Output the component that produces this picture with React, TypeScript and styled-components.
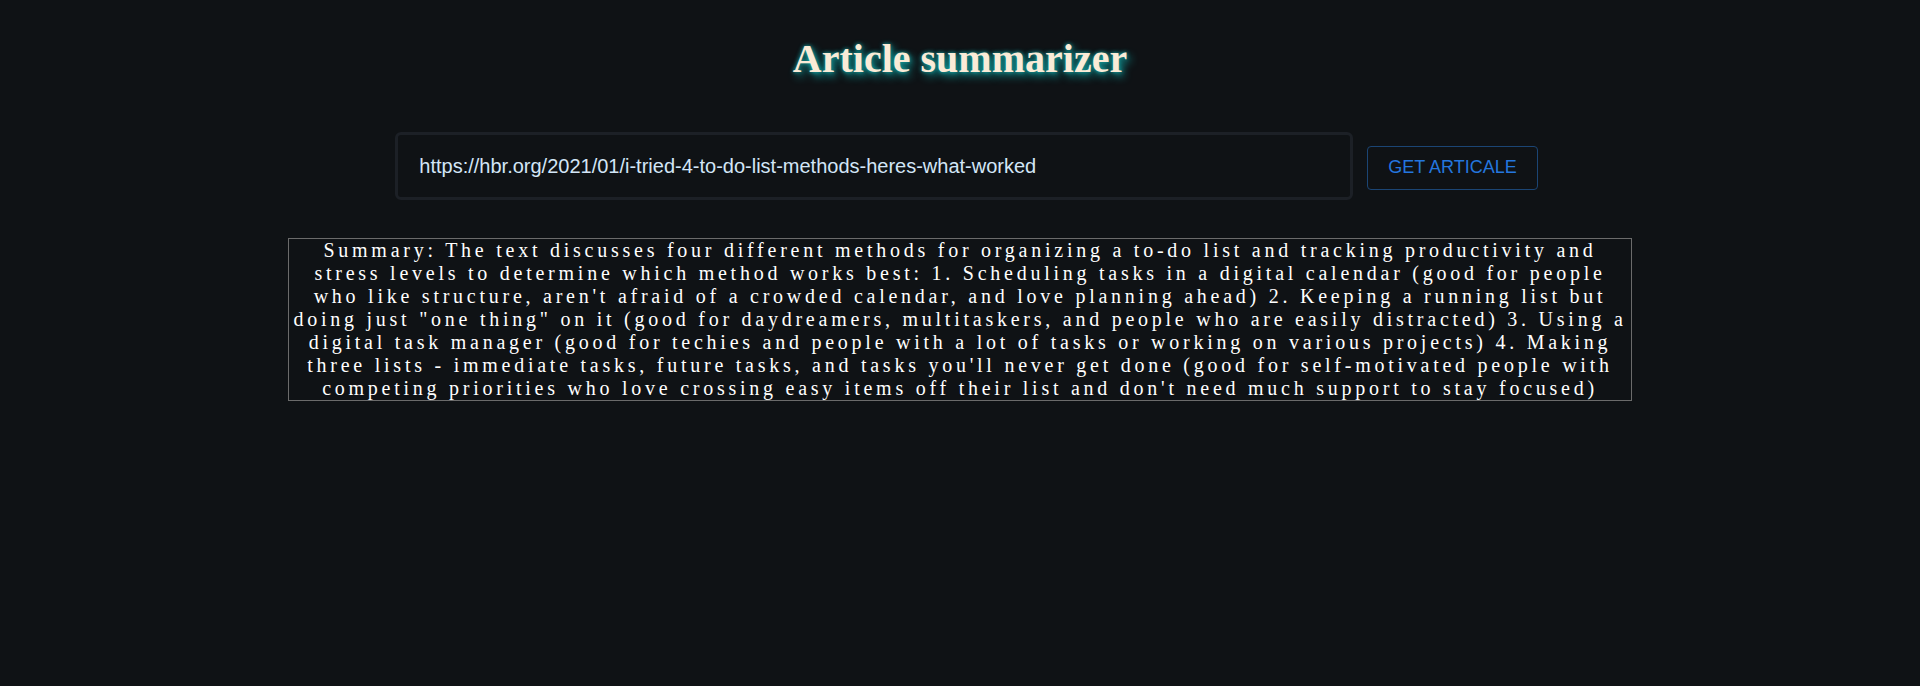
import React from "react";
import styled, { createGlobalStyle } from "styled-components";

const GlobalStyle = createGlobalStyle`
  html, body {
    margin: 0;
    padding: 0;
    background: #0f1215;
  }
  body {
    min-height: 686px;
    font-family: "Liberation Serif", "Times New Roman", serif;
  }
`;

const Page = styled.main`
  display: flex;
  flex-direction: column;
  align-items: center;
  padding-top: 31px;
`;

const Title = styled.h1`
  margin: 0;
  font-family: "Liberation Serif", "Times New Roman", serif;
  font-size: 40px;
  font-weight: bold;
  line-height: 56px;
  color: #faebd7;
  text-shadow: 0 0 4px #17b3b3, 3px 4px 8px #0f9a9a;
`;

const SearchRow = styled.div`
  display: flex;
  align-items: center;
  gap: 14px;
  margin-top: 45px;
  padding-left: 13px;
`;

const UrlInput = styled.input`
  box-sizing: border-box;
  width: 958px;
  height: 68px;
  padding: 0 21px;
  background: #0f1215;
  border: 3px solid #1c2026;
  border-radius: 6px;
  color: #d3e6f7;
  font-family: "Liberation Sans", Arial, sans-serif;
  font-size: 20px;
  outline: none;
`;

const FetchButton = styled.button`
  box-sizing: border-box;
  height: 44px;
  padding: 0 20px;
  margin-top: 3px;
  background: transparent;
  border: 1px solid #1b4574;
  border-radius: 4px;
  color: #2476de;
  font-family: "Liberation Sans", Arial, sans-serif;
  font-size: 18px;
  text-transform: uppercase;
  cursor: pointer;
`;

const SummaryBox = styled.section`
  box-sizing: border-box;
  width: 1344px;
  margin-top: 38px;
  border: 1px solid #6b6b6b;
  color: #ffffff;
  font-family: "Liberation Serif", "Times New Roman", serif;
  font-size: 20px;
  line-height: 23px;
  letter-spacing: 3.75px;
  text-align: center;
`;

const summary =
  "Summary: The text discusses four different methods for organizing a to-do list and tracking productivity and stress levels to determine which method works best: 1. Scheduling tasks in a digital calendar (good for people who like structure, aren't afraid of a crowded calendar, and love planning ahead) 2. Keeping a running list but doing just \"one thing\" on it (good for daydreamers, multitaskers, and people who are easily distracted) 3. Using a digital task manager (good for techies and people with a lot of tasks or working on various projects) 4. Making three lists - immediate tasks, future tasks, and tasks you'll never get done (good for self-motivated people with competing priorities who love crossing easy items off their list and don't need much support to stay focused)";

export default function App() {
  return (
    <>
      <GlobalStyle />
      <Page>
        <Title>Article summarizer</Title>
        <SearchRow>
          <UrlInput
            type="text"
            defaultValue="https://hbr.org/2021/01/i-tried-4-to-do-list-methods-heres-what-worked"
          />
          <FetchButton type="button">Get Articale</FetchButton>
        </SearchRow>
        <SummaryBox>{summary}</SummaryBox>
      </Page>
    </>
  );
}
